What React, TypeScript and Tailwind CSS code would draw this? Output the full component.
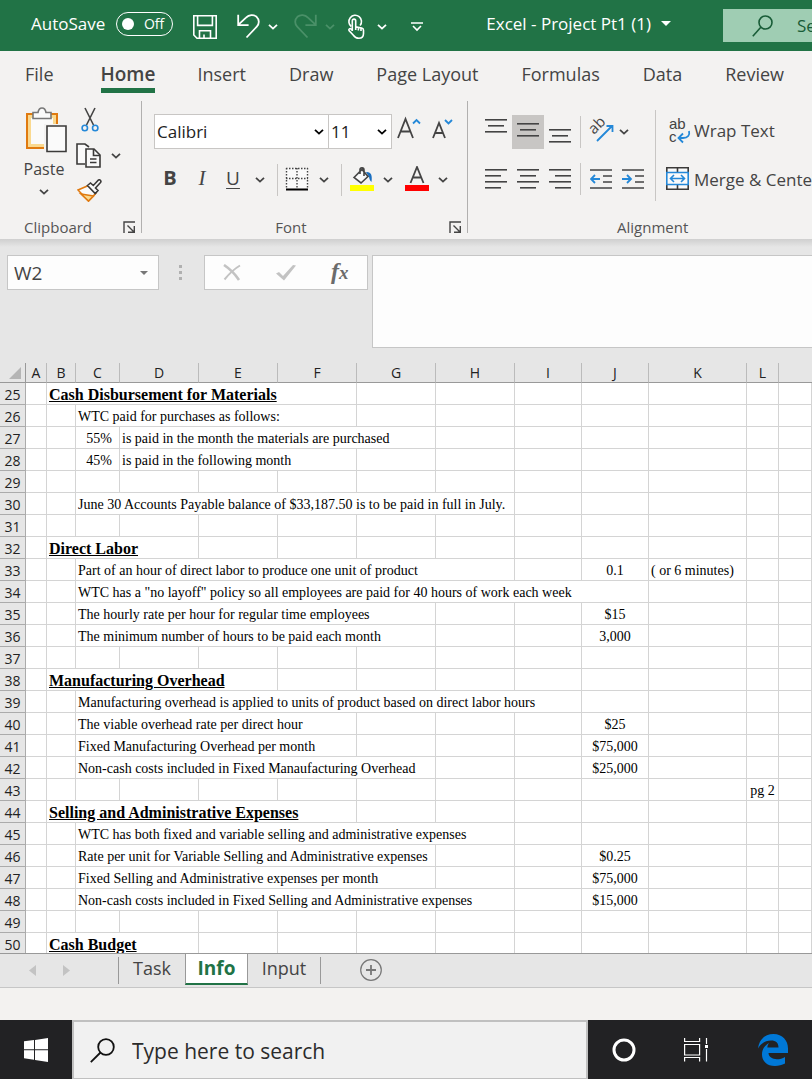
import type { ReactNode } from "react";

type Cell = { col: number; span: number; text: string; align?: "center" | "right"; heading?: boolean };

const COLUMNS = [
  { name: "A", width: "w-[21px]" },
  { name: "B", width: "w-[29px]" },
  { name: "C", width: "w-[44px]" },
  { name: "D", width: "w-[79px]" },
  { name: "E", width: "w-[79px]" },
  { name: "F", width: "w-[79px]" },
  { name: "G", width: "w-[79px]" },
  { name: "H", width: "w-[79px]" },
  { name: "I", width: "w-[67px]" },
  { name: "J", width: "w-[67px]" },
  { name: "K", width: "w-[98px]" },
  { name: "L", width: "w-[32px]" },
  { name: "", width: "w-auto" },
];

const ROWS: Record<number, Cell[]> = {
  25: [{ col: 1, span: 5, text: "Cash Disbursement for Materials", heading: true }],
  26: [{ col: 2, span: 4, text: "WTC paid for purchases as follows:" }],
  27: [
    { col: 2, span: 1, text: "55%", align: "right" },
    { col: 3, span: 4, text: "is paid in the month the materials are purchased" },
  ],
  28: [
    { col: 2, span: 1, text: "45%", align: "right" },
    { col: 3, span: 3, text: "is paid in the following month" },
  ],
  30: [{ col: 2, span: 6, text: "June 30 Accounts Payable balance of $33,187.50 is to be paid in full in July." }],
  32: [{ col: 1, span: 3, text: "Direct Labor", heading: true }],
  33: [
    { col: 2, span: 6, text: "Part of an hour of direct labor to produce one unit of product" },
    { col: 9, span: 1, text: "0.1", align: "center" },
    { col: 10, span: 1, text: "( or 6 minutes)" },
  ],
  34: [{ col: 2, span: 8, text: 'WTC has a "no layoff" policy so all employees are paid for 40 hours of work each week' }],
  35: [
    { col: 2, span: 5, text: "The hourly rate per hour for regular time employees" },
    { col: 9, span: 1, text: "$15", align: "center" },
  ],
  36: [
    { col: 2, span: 5, text: "The minimum number of hours to be paid each month" },
    { col: 9, span: 1, text: "3,000", align: "center" },
  ],
  38: [{ col: 1, span: 4, text: "Manufacturing Overhead", heading: true }],
  39: [{ col: 2, span: 7, text: "Manufacturing overhead is applied to units of product based on direct labor hours" }],
  40: [
    { col: 2, span: 4, text: "The viable overhead rate per direct hour" },
    { col: 9, span: 1, text: "$25", align: "center" },
  ],
  41: [
    { col: 2, span: 4, text: "Fixed Manufacturing Overhead per month" },
    { col: 9, span: 1, text: "$75,000", align: "center" },
  ],
  42: [
    { col: 2, span: 5, text: "Non-cash costs included in Fixed Manaufacturing Overhead" },
    { col: 9, span: 1, text: "$25,000", align: "center" },
  ],
  43: [{ col: 11, span: 1, text: "pg 2", align: "center" }],
  44: [{ col: 1, span: 5, text: "Selling and Administrative Expenses", heading: true }],
  45: [{ col: 2, span: 6, text: "WTC has both fixed and variable selling and administrative expenses" }],
  46: [
    { col: 2, span: 5, text: "Rate per unit for Variable Selling and Administrative expenses" },
    { col: 9, span: 1, text: "$0.25", align: "center" },
  ],
  47: [
    { col: 2, span: 5, text: "Fixed Selling and Administrative expenses per month" },
    { col: 9, span: 1, text: "$75,000", align: "center" },
  ],
  48: [
    { col: 2, span: 6, text: "Non-cash costs included in Fixed Selling and Administrative expenses" },
    { col: 9, span: 1, text: "$15,000", align: "center" },
  ],
  50: [{ col: 1, span: 3, text: "Cash Budget", heading: true }],
};

const ROW_NUMBERS = Array.from({ length: 26 }, (_, i) => 25 + i);

const TABS = ["File", "Home", "Insert", "Draw", "Page Layout", "Formulas", "Data", "Review"];

function Chevron({ className = "" }: { className?: string }) {
  return (
    <svg viewBox="0 0 10 6" fill="none" stroke="currentColor" strokeWidth="1.8" className={`h-[6px] w-[10px] shrink-0 ${className}`}>
      <path d="M1 0.8 5 4.6 9 0.8" />
    </svg>
  );
}

function Launcher({ label }: { label: string }) {
  return (
    <button aria-label={label} className="flex size-[14px] items-center justify-center">
      <svg viewBox="0 0 13 13" fill="none" stroke="#444" strokeWidth="1.4" className="size-[13px]">
        <path d="M1 12V1h11M4.5 4.5l6 6M11.3 5v6.3H5" />
      </svg>
    </button>
  );
}

function Lines({ rows, top = 0 }: { rows: [number, number][]; top?: number }) {
  return (
    <svg viewBox="0 0 22 26" className="h-[26px] w-[22px]" fill="#444">
      {rows.map(([x, w], i) => (
        <rect key={i} x={x} y={top + i * 6} width={w} height="1.6" />
      ))}
    </svg>
  );
}

function IconButton({ label, className = "", children }: { label: string; className?: string; children: ReactNode }) {
  return (
    <button aria-label={label} className={`flex shrink-0 items-center justify-center ${className}`}>
      {children}
    </button>
  );
}

function TitleBar() {
  return (
    <header className="flex h-[51px] items-center overflow-hidden bg-[#217346] pt-[2px] pl-[31px] text-white">
      <label htmlFor="autosave" className="mb-[6px] text-[17px] whitespace-nowrap">AutoSave</label>
      <button id="autosave" role="switch" aria-checked="false" className="mb-[6px] ml-[11px] flex h-[24px] w-[57px] shrink-0 items-center justify-between rounded-full border border-white pr-2 pl-[5px] text-[14px]">
        <span className="size-3 rounded-full bg-white" />
        Off
      </button>
      <IconButton label="Save" className="ml-5">
        <svg viewBox="0 0 24 24" fill="none" stroke="white" strokeWidth="1.6" className="size-6">
          <path d="M.8.8h22.4v22.4H4L.8 20zM4.6.8v9.6h14.8V.8M6.5 23v-7.2h11V23M11 23v-3.5" />
        </svg>
      </IconButton>
      <IconButton label="Undo" className="ml-5">
        <svg viewBox="0 0 23 25" fill="none" stroke="white" strokeWidth="1.8" className="h-[25px] w-[23px]">
          <path d="M1.2.8v10.4h10.4M1.5 10.7 9 3.6c3-3 7.6-3.4 10.6-.8 2.9 2.7 2.9 7 .2 9.8L9.5 23.5" />
        </svg>
      </IconButton>
      <Chevron className="ml-2" />
      <IconButton label="Redo" className="ml-4 text-[#4a9068]">
        <svg viewBox="0 0 23 25" fill="none" stroke="currentColor" strokeWidth="1.8" className="h-[25px] w-[23px]">
          <path d="M21.8.8v10.4H11.4M21.5 10.7 14 3.6c-3-3-7.6-3.4-10.6-.8C.5 5.5.5 9.8 3.2 12.6l10.3 10.9" />
        </svg>
      </IconButton>
      <Chevron className="ml-2 text-[#4a9068]" />
      <IconButton label="Touch/Mouse Mode" className="ml-3">
        <svg viewBox="0 0 18 25" fill="none" stroke="white" strokeWidth="1.6" className="h-[25px] w-[18px]">
          <path d="M4.3 12.5a6.3 6.3 0 1 1 8.8-1" />
          <path d="M5.3 17V6.8c0-2.3 3.4-2.3 3.4 0v6l6 1.2c1.2.3 1.8 1 1.8 2.2v3.3c0 3-1.7 4.7-4.7 4.7-2.5 0-4-.8-5.2-2.7L2 16.500c-.7-1.500 1-2.500 2-1.500l1.500 1.700M8.700 12v4M11.400 13.500v3M14 14v3" />
        </svg>
      </IconButton>
      <Chevron className="ml-3" />
      <IconButton label="Customize Quick Access Toolbar" className="ml-6">
        <svg viewBox="0 0 12 10" fill="none" stroke="white" strokeWidth="1.6" className="h-[10px] w-3">
          <path d="M0 1h12M2 4l4 4 4-4" />
        </svg>
      </IconButton>
      <button className="mb-[6px] ml-[63px] flex shrink-0 items-center gap-[10px] text-[17px] whitespace-nowrap">
        Excel - Project Pt1 (1)
        <svg viewBox="0 0 10 5" fill="white" className="h-[5px] w-[10px]">
          <path d="M0 0h10L5 5z" />
        </svg>
      </button>
      <label className="mb-[2px] ml-[52px] flex h-[33px] min-w-0 flex-1 items-center gap-6 overflow-hidden bg-[#9fcdb3] pl-[29px] text-[#185c37]">
        <svg viewBox="0 0 21 22" fill="none" stroke="currentColor" strokeWidth="1.6" className="h-[22px] w-[21px] shrink-0">
          <circle cx="13.5" cy="7.5" r="6.5" />
          <path d="M8.8 12.2.8 21.2" />
        </svg>
        <input aria-label="Search" placeholder="Search" className="w-20 shrink-0 bg-transparent text-[17px] outline-none placeholder:text-[#185c37]" />
      </label>
    </header>
  );
}

function RibbonTabs() {
  return (
    <nav className="flex h-[44px] items-start overflow-hidden pt-[7px] pl-[25px] text-[18px] text-[#444]">
      {TABS.map((tab) => (
        <a
          key={tab}
          href="#"
          className={
            tab === "Home"
              ? "mx-[30px] h-[35px] shrink-0 border-b-[5px] border-[#217346] text-[19px] leading-8 font-semibold"
              : "mr-[43px] h-[35px] shrink-0 leading-8 first:mr-[17px] nth-3:ml-[12px]"
          }
        >
          {tab}
        </a>
      ))}
    </nav>
  );
}

function ClipboardGroup() {
  return (
    <section className="flex w-[142px] shrink-0 flex-col justify-between border-r border-[#b1b0af] pl-[21px]">
      <div className="flex">
        <button className="flex w-[46px] flex-col items-center pt-[6px] text-[16px] text-[#444]">
          <svg viewBox="0 0 42 46" className="h-[46px] w-[42px] shrink-0 self-end" fill="none">
            <path d="M2 7h30v34H2z" fill="#fad98f" stroke="#e07a10" strokeWidth="2" />
            <path d="M6 11h22v26H6z" fill="#fafafa" />
            <path d="M8 11.5V5.5h5c.5-3 2-4.5 4-4.5s3.5 1.5 4 4.5h5v6z" fill="#fafafa" stroke="#777" strokeWidth="1.6" />
            <path d="M19 17h23v29H19z" fill="#f3f2f1" />
            <path d="M22 19h19v25.5H22z" fill="#fafafa" stroke="#3b3a39" strokeWidth="1.6" />
          </svg>
          <span className="leading-8">Paste</span>
          <Chevron className="mt-1" />
        </button>
        <div className="ml-[9px] flex flex-col gap-[11px] pt-[6px] text-[#444]">
          <IconButton label="Cut" className="w-7">
            <svg viewBox="0 0 18 25" fill="none" strokeWidth="1.6" className="h-[25px] w-[18px]">
              <path d="M4 1l8.5 17M14 1 5.5 18" stroke="#444" />
              <circle cx="3.8" cy="21" r="2.7" stroke="#2488d8" />
              <circle cx="14.2" cy="21" r="2.7" stroke="#2488d8" />
            </svg>
          </IconButton>
          <div className="flex items-center gap-[9px]">
            <IconButton label="Copy">
              <svg viewBox="0 0 26 25" fill="#fafafa" stroke="#3b3a39" strokeWidth="1.6" className="h-[25px] w-[26px]">
                <path d="M9 21H1V1h8l4 3" />
                <path d="M10 6h8l6 6v12H10z" />
                <path d="M17.5 6v6.5H24M14 16h6.5M14 19.5h6.5" fill="none" />
              </svg>
            </IconButton>
            <Chevron />
          </div>
          <IconButton label="Format Painter" className="w-[26px]">
            <svg viewBox="0 0 25 23" strokeWidth="1.6" className="h-[23px] w-[25px]">
              <path d="M1 11 11.5 6.5 19 14 11.5 22z" fill="#fafafa" stroke="#e07a10" />
              <path d="M4 15l12.5 2-5 5z" fill="#fad98f" stroke="#e07a10" />
              <path d="m10.5 6.5 3-2.5 2.8 2.5L21.500 1c1.500-.7 3.200 1 2 2.500L18.500 9l2.500 2.500-2.800 3z" fill="#fafafa" stroke="#3b3a39" />
            </svg>
          </IconButton>
        </div>
      </div>
      <footer className="flex h-3 items-center justify-between pr-[5px] pl-[3px] text-[15px] text-[#555]">
        Clipboard
        <Launcher label="Clipboard options" />
      </footer>
    </section>
  );
}

function FontGroup() {
  return (
    <section className="flex w-[326px] shrink-0 flex-col justify-between border-r border-[#b1b0af] pl-3 text-[#444]">
      <div>
        <div className="mt-[13px] flex">
          <div className="relative flex w-[175px] items-center border border-[#c8c6c4] bg-white">
            <select aria-label="Font" className="h-[33px] w-full appearance-none pl-[2px] text-[17px] text-[#222]">
              <option>Calibri</option>
            </select>
            <Chevron className="pointer-events-none absolute right-1 text-black" />
          </div>
          <div className="relative flex w-[63px] items-center border border-l-0 border-[#c8c6c4] bg-white">
            <select aria-label="Font size" className="h-[33px] w-full appearance-none pl-[2px] text-[17px] text-[#222]">
              <option>11</option>
            </select>
            <Chevron className="pointer-events-none absolute right-1 text-black" />
          </div>
          <IconButton label="Increase font size" className="mb-2 ml-[5px]">
            <svg viewBox="0 0 24 24" fill="none" stroke="#444" strokeWidth="1.8" className="size-6">
              <path d="M1 22 8.5 3 16 22M3.5 15.5h10" />
              <path d="m16 7.5 3.5-3.5L23 7.5" stroke="#2488d8" />
            </svg>
          </IconButton>
          <IconButton label="Decrease font size" className="mb-2 ml-[10px]">
            <svg viewBox="0 0 24 24" fill="none" stroke="#444" strokeWidth="1.8" className="size-6">
              <path d="M2 22 8 7l6 15M4 17h8" />
              <path d="m14 4 3.5 3.5L21 4" stroke="#2488d8" />
            </svg>
          </IconButton>
        </div>
        <div className="mt-[13px] flex h-9 items-center pl-2">
          <button className="mb-1 w-4 text-[20px] leading-none font-bold">B</button>
          <button className="mb-1 ml-4 w-4 font-['Liberation_Serif',serif] text-[21px] leading-none italic">I</button>
          <button className="mb-1 ml-[15px] w-4 text-[19px] leading-none underline underline-offset-3">U</button>
          <Chevron className="ml-[14px]" />
          <span className="ml-3 h-8 w-px bg-[#c8c6c4]" />
          <IconButton label="Borders" className="mb-[2px] ml-[7px]">
            <svg viewBox="0 0 24 24" fill="none" stroke="#444" className="size-6">
              <path d="M1 1h22v20H1z" fill="#fafafa" stroke="none" />
              <path d="M1 1.5h22M1 11.5h22M1.5 1v20M12 1v20M22.5 1v20" strokeWidth="1.4" strokeDasharray="1.5 1.5" />
              <path d="M1 22.5h22" stroke="#000" strokeWidth="2" />
            </svg>
          </IconButton>
          <Chevron className="ml-[10px]" />
          <span className="ml-3 h-8 w-px bg-[#c8c6c4]" />
          <IconButton label="Fill color" className="mb-[2px] ml-2">
            <svg viewBox="0 0 24 26" fill="none" strokeWidth="1.6" className="h-[26px] w-6">
              <path d="M16 6c5-.5 6.500 3 5.500 10-1.500-1-2-3-2.500-5z" fill="#1a6fc0" />
              <path d="m4 11.500 8-8 6 7-7 6.500zM10 8V3.500C10 1 14 1 14 4v6" stroke="#444" fill="#fafafa" />
              <path d="M0 19h24v6H0z" fill="#ff0" />
            </svg>
          </IconButton>
          <Chevron className="ml-[9px]" />
          <IconButton label="Font color" className="mb-[2px] ml-3">
            <svg viewBox="0 0 24 26" fill="none" stroke="#444" strokeWidth="1.8" className="h-[26px] w-6">
              <path d="M5.5 17 12 1l6.5 16M7.8 11.5h8.4" />
              <path d="M0 19h24v6H0z" fill="red" stroke="none" />
            </svg>
          </IconButton>
          <Chevron className="ml-[9px]" />
        </div>
      </div>
      <footer className="flex h-3 items-center pr-[5px] text-[15px] text-[#555]">
        <span className="flex-1 pr-5 text-center">Font</span>
        <Launcher label="Font settings" />
      </footer>
    </section>
  );
}

function AlignmentGroup() {
  return (
    <section className="flex min-w-0 flex-1 flex-col justify-between pl-3 text-[#444]">
      <div className="flex">
        <div className="shrink-0 pt-[14px]">
          <div className="flex h-[34px] items-center">
            <IconButton label="Top align" className="h-[34px] w-8"><Lines rows={[[0, 22], [3, 16], [0, 22]]} /></IconButton>
            <IconButton label="Middle align" className="h-[34px] w-8 bg-[#c8c6c4]"><Lines top={4} rows={[[0, 22], [3, 16], [0, 22]]} /></IconButton>
            <IconButton label="Bottom align" className="h-[34px] w-8"><Lines top={10} rows={[[0, 22], [3, 16], [0, 22]]} /></IconButton>
            <span className="ml-[4px] h-8 w-px bg-[#c8c6c4]" />
            <IconButton label="Orientation" className="mb-1 ml-2">
              <svg viewBox="0 0 25 25" fill="none" stroke="#444" strokeWidth="1.6" className="size-[25px] overflow-visible">
                <text transform="translate(5 17) rotate(-45)" fill="#444" stroke="none" className="text-[15px]">ab</text>
                <path d="m8 23 15-15M17.5 8H23.5V14" stroke="#2488d8" strokeWidth="1.8" />
              </svg>
            </IconButton>
            <Chevron className="ml-[5px]" />
          </div>
          <div className="mt-[14px] flex h-8 items-center">
            <IconButton label="Align left" className="w-8"><Lines top={3} rows={[[0, 22], [0, 16], [0, 22], [0, 16]]} /></IconButton>
            <IconButton label="Center" className="w-8"><Lines top={3} rows={[[0, 22], [3, 16], [0, 22], [3, 16]]} /></IconButton>
            <IconButton label="Align right" className="w-8"><Lines top={3} rows={[[0, 22], [6, 16], [0, 22], [6, 16]]} /></IconButton>
            <span className="ml-[4px] h-8 w-px bg-[#c8c6c4]" />
            <IconButton label="Decrease indent" className="ml-2 w-6">
              <svg viewBox="0 0 22 26" className="h-[26px] w-[22px]" fill="none" stroke="#444" strokeWidth="1.6">
                <path d="M0 4h22M13 10h9M13 16h9M0 22h22" />
                <path d="M10 13H1M5 9l-4 4 4 4" stroke="#2488d8" strokeWidth="1.8" />
              </svg>
            </IconButton>
            <IconButton label="Increase indent" className="ml-2 w-6">
              <svg viewBox="0 0 22 26" className="h-[26px] w-[22px]" fill="none" stroke="#444" strokeWidth="1.6">
                <path d="M0 4h22M13 10h9M13 16h9M0 22h22" />
                <path d="M0 13h9M5 9l4 4-4 4" stroke="#2488d8" strokeWidth="1.8" />
              </svg>
            </IconButton>
          </div>
        </div>
        <div className="mt-[9px] ml-[10px] flex shrink-0 flex-col gap-[7px] border-l border-[#c8c6c4] pl-[10px] text-[17px] whitespace-nowrap">
          <button className="flex h-[42px] items-center gap-[3px] pl-[3px]">
            <svg viewBox="0 0 22 26" fill="none" stroke="#2488d8" strokeWidth="1.8" className="h-[26px] w-[22px] overflow-visible font-['Liberation_Sans',sans-serif] text-[15px]">
              <text x="0" y="11" fill="#444" stroke="none">ab</text>
              <text x="0" y="24" fill="#444" stroke="none">c</text>
              <path d="M20 13c1 4-1 7-6 7H10M14 15.5 9.5 20l4.5 4.5" />
            </svg>
            Wrap Text
          </button>
          <button className="flex h-[42px] items-center gap-[5px]">
            <svg viewBox="0 0 23 23" fill="#fafafa" stroke="#3b3a39" strokeWidth="1.6" className="mb-1 size-[23px]">
              <path d="M.8.8h21.4v21.4H.8zM11.5 1v21" />
              <path d="M.8 5.500h21.400v12H.8zM4 11.500h15M8 8l-3.500 3.500L8 15M15 8l3.500 3.500L15 15" stroke="#2488d8" />
            </svg>
            Merge &amp; Center
          </button>
        </div>
      </div>
      <footer className="flex h-3 items-center pl-[137px] text-[15px] text-[#555]">Alignment</footer>
    </section>
  );
}

function FormulaBar() {
  return (
    <div className="flex items-start pt-2 pl-[7px]">
      <div className="flex h-[35px] w-[152px] shrink-0 items-center border border-[#c6c6c6] bg-[#fdfdfd] pr-[10px]">
        <input aria-label="Name box" defaultValue="W2" className="min-w-0 flex-1 bg-transparent pt-[2px] pl-[6px] text-[19px] text-[#444] outline-none" />
        <svg viewBox="0 0 8 4" fill="#777" className="h-1 w-2"><path d="M0 0h8L4 4z" /></svg>
      </div>
      <div className="ml-[20px] flex h-[35px] w-[3px] shrink-0 flex-col items-center justify-center gap-[3px]">
        <span className="size-[3px] bg-[#b0b0b0]" />
        <span className="size-[3px] bg-[#b0b0b0]" />
        <span className="size-[3px] bg-[#b0b0b0]" />
      </div>
      <div className="ml-[22px] flex h-[35px] w-[164px] shrink-0 items-center border border-[#c6c6c6] bg-[#fdfdfd] pl-[18px]">
        <IconButton label="Cancel">
          <svg viewBox="0 0 18 17" fill="none" stroke="#c3c3c3" className="h-[17px] w-[18px]">
            <path d="M1 1c6 4 11 9 15 15" strokeWidth="2.6" />
            <path d="M17 1.5C11 5 6 10 1.5 15.5" strokeWidth="2" />
          </svg>
        </IconButton>
        <IconButton label="Enter" className="ml-[35px]">
          <svg viewBox="0 0 20 17" fill="#c3c3c3" className="h-[17px] w-5">
            <path d="M0 9.5 3 8l4 4L17 1l3 .5L8 16.5z" />
          </svg>
        </IconButton>
        <button aria-label="Insert function" className="mb-1 ml-[35px] font-['Liberation_Serif',serif] text-[24px] leading-none font-bold text-[#6b6b6b] italic">
          f<span className="text-[19px]">x</span>
        </button>
      </div>
      <textarea aria-label="Formula bar" className="ml-1 h-[93px] min-w-0 flex-1 resize-none border border-r-0 border-[#c6c6c6] bg-[#fdfdfd] outline-none" />
    </div>
  );
}

function SheetRow({ n }: { n: number }) {
  const cells = ROWS[n] ?? [];
  const out: ReactNode[] = [];
  let col = 0;
  while (col < COLUMNS.length) {
    const cell = cells.find((c) => c.col === col);
    const align = cell?.align === "center" ? "text-center" : cell?.align === "right" ? "pr-[7px] text-right" : "pl-[2px]";
    const font = cell?.heading ? "text-[16px] leading-[19px] font-bold underline" : "";
    out.push(
      <td key={col} colSpan={cell?.span ?? 1} className={`border-r border-b border-[#d4d4d4] pt-[2px] whitespace-nowrap ${align} ${font}`}>
        {cell?.text}
      </td>,
    );
    col += cell?.span ?? 1;
  }
  return (
    <tr className="h-[22px]">
      <th scope="row" className="border-r border-b border-[#ababab] bg-[#e6e6e6] pt-[2px] font-['Open_Sans',sans-serif] text-[14px] font-normal text-[#222]">{n}</th>
      {out}
    </tr>
  );
}

function Sheet() {
  return (
    <div className="h-[591px] overflow-hidden border-b border-[#999]">
      <table className="w-full table-fixed border-separate border-spacing-0 font-['Liberation_Serif',serif] text-[14px] leading-[19px] text-black">
        <colgroup>
          <col className="w-[26px]" />
          {COLUMNS.map((c, i) => (
            <col key={i} className={c.width} />
          ))}
        </colgroup>
        <thead>
          <tr className="h-[20px] bg-[#e6e6e6] font-['Open_Sans',sans-serif] text-[14px] leading-[19px]">
            <th aria-label="Select all" className="border-r border-b border-[#999] p-0">
              <svg viewBox="0 0 12 12" fill="#b5b5b5" className="mr-1 ml-auto size-3"><path d="M12 0v12H0z" /></svg>
            </th>
            {COLUMNS.map((c, i) => (
              <th key={i} scope="col" className="border-r border-b border-r-[#bbb] border-b-[#999] p-0 font-normal text-[#222] last:border-r-0">{c.name}</th>
            ))}
          </tr>
        </thead>
        <tbody className="bg-white">
          {ROW_NUMBERS.map((n) => (
            <SheetRow key={n} n={n} />
          ))}
        </tbody>
      </table>
    </div>
  );
}

function SheetTabs() {
  return (
    <div className="flex h-[34px] items-start border-b border-[#c6c6c6] bg-[#e6e6e6] text-[18px] text-[#444]">
      <div className="flex h-8 w-[118px] items-center gap-[27px] pl-[29px]">
        <IconButton label="Previous sheets"><svg viewBox="0 0 7 11" fill="#c3c3c3" className="h-[11px] w-[7px]"><path d="M7 0v11L0 5.5z" /></svg></IconButton>
        <IconButton label="Next sheets"><svg viewBox="0 0 7 11" fill="#c3c3c3" className="h-[11px] w-[7px]"><path d="M0 0v11l7-5.5z" /></svg></IconButton>
      </div>
      <button className="mt-[3px] h-[27px] w-[67px] border-l border-[#999] pb-[6px] leading-5">Task</button>
      <button className="h-[31px] w-[63px] border-x border-b-2 border-x-[#999] border-b-[#217346] bg-white pb-[2px] text-[19px] leading-6 font-bold text-[#217346]">Info</button>
      <button className="mt-[3px] h-[27px] w-[73px] border-r border-[#999] pb-[6px] leading-5">Input</button>
      <IconButton label="New sheet" className="mt-[5px] ml-[39px]">
        <svg viewBox="0 0 22 22" fill="none" stroke="#777" className="size-[22px]">
          <circle cx="11" cy="11" r="10.3" strokeWidth="1.2" />
          <path d="M6 11h10M11 6v10" strokeWidth="1.8" />
        </svg>
      </IconButton>
    </div>
  );
}

function Taskbar() {
  return (
    <footer className="flex h-[59px] bg-[#222224]">
      <IconButton label="Start" className="w-[72px]">
        <svg viewBox="0 0 24 24" fill="white" className="size-6">
          <path d="M0 3.3 10 2v9.3H0zM11 1.9 24 0v11.3H11zM0 12.3h10v9.4L0 20.3zM11 12.3h13V24L11 22z" />
        </svg>
      </IconButton>
      <label className="flex min-w-0 flex-1 items-center border-2 border-b border-[#c0c0c0] bg-[#f1f1f1] pl-4">
        <svg viewBox="0 0 25 25" fill="none" stroke="#111" strokeWidth="1.8" className="size-[25px] shrink-0">
          <circle cx="16" cy="9" r="7.8" />
          <path d="M10.5 14.5.8 24.2" />
        </svg>
        <input aria-label="Search Windows" placeholder="Type here to search" className="ml-[17px] h-full min-w-0 flex-1 bg-transparent pt-[2px] text-[21px] outline-none placeholder:text-[#2b2b2b]" />
      </label>
      <div className="flex w-[224px] shrink-0 items-center pl-6">
        <IconButton label="Cortana">
          <svg viewBox="0 0 24 24" fill="none" stroke="white" strokeWidth="3" className="size-6"><circle cx="12" cy="12" r="10" /></svg>
        </IconButton>
        <IconButton label="Task View" className="ml-12">
          <svg viewBox="0 0 24 24" fill="none" stroke="white" strokeWidth="1.2" className="size-6">
            <path d="M.6 0v3.5h15V0M.6 6.5h15v10.5H.6zM.6 23.5V19.5h15v4M22.5 0v6M22.5 11v12.5" />
            <path d="M21 7h3v3h-3z" fill="white" stroke="none" />
          </svg>
        </IconButton>
        <IconButton label="Microsoft Edge" className="ml-[50px]">
          <svg viewBox="0 0 30 32" fill="#0078d7" className="h-8 w-[30px]">
            <path d="M0 14.5C1 5.5 7 0 15.5 0 24.5 0 30 6.5 30 14.5V19H10.5c.2 4 4 6.2 8.3 6.2 3 0 5.7-.8 8.2-2.3v6.7c-3 1.6-6.4 2.4-10 2.4C9 32 4 27.3 4 20.5 4 15.5 6.5 11.5 11 9c-1.2 1.5-1.5 3-1.7 4.5H20.5C20.5 9 18 6.5 13 6.5 7.5 6.5 3 9.5 0 14.5z" />
          </svg>
        </IconButton>
      </div>
    </footer>
  );
}

export default function App() {
  return (
    <div className="flex min-h-screen flex-col overflow-x-hidden bg-[#f3f2f0] font-['Open_Sans',sans-serif]">
      <TitleBar />
      <div className="bg-[#f3f2f1]">
        <RibbonTabs />
        <div className="flex h-[144px] py-[6px]">
          <ClipboardGroup />
          <FontGroup />
          <AlignmentGroup />
        </div>
      </div>
      <div className="bg-[#e6e6e6] pb-[15px]">
        <div className="h-2 bg-linear-to-b from-[#cfcfcf] to-[#e6e6e6]" />
        <FormulaBar />
      </div>
      <Sheet />
      <SheetTabs />
      <div className="min-h-8 flex-1" />
      <Taskbar />
    </div>
  );
}
